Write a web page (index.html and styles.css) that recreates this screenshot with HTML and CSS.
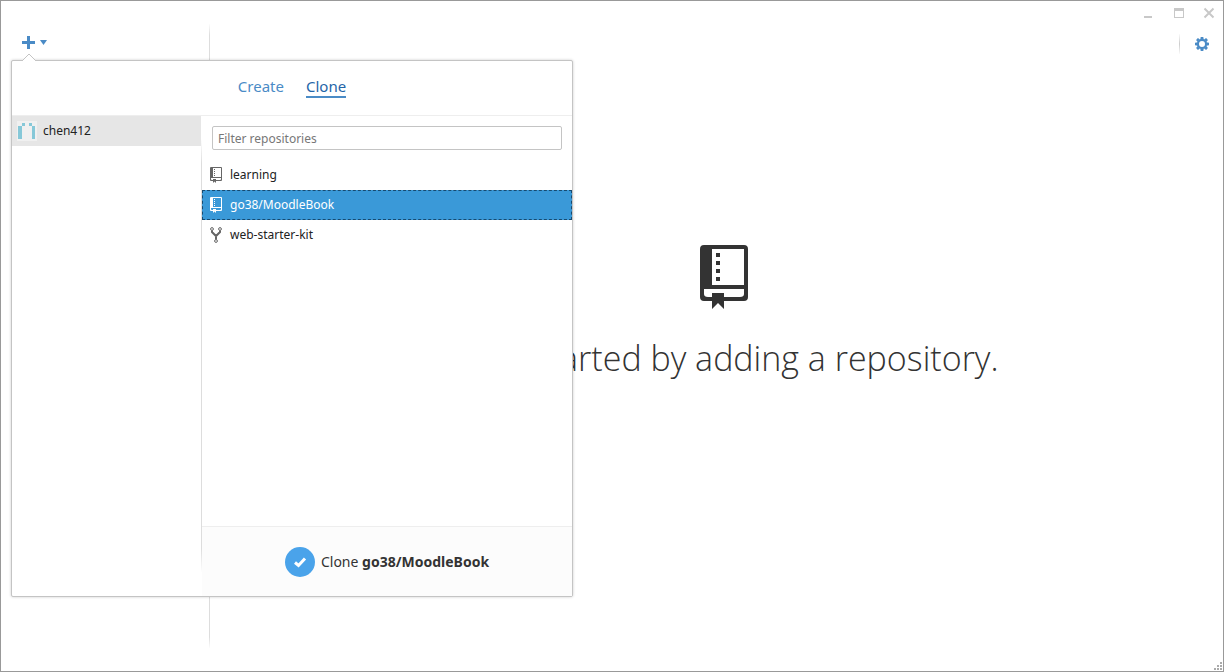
FILE: index.html
```html
<!DOCTYPE html>
<html lang="en">
<head>
<meta charset="utf-8">
<title>Clone a repository</title>
<link rel="stylesheet" href="styles.css">
</head>
<body>
<svg class="defs" aria-hidden="true">
  <symbol id="repo" viewBox="0 0 48 64">
    <path fill="currentColor" fill-rule="evenodd" d="M4 0H44Q48 0 48 4V52Q48 56 44 56H24V64L18 58L12 64V56H4Q0 56 0 52V4Q0 0 4 0ZM12 4V40H44V4ZM4 44V49Q4 52 8 52H12V48H24V52H40Q44 52 44 49V44ZM16 8H20V12H16ZM16 16H20V20H16ZM16 24H20V28H16ZM16 32H20V36H16Z"/>
  </symbol>
</svg>
<div class="window">
  <header class="titlebar">
    <button class="win-btn" aria-label="Minimize"><svg width="12" height="12" viewBox="0 0 12 12"><path d="M1 9h8v2H1z"/></svg></button>
    <button class="win-btn" aria-label="Maximize"><svg width="12" height="12" viewBox="0 0 12 12"><path fill-rule="evenodd" d="M1 1h10v10H1zM2 4v6h8V4z"/></svg></button>
    <button class="win-btn" aria-label="Close"><svg width="12" height="12" viewBox="0 0 12 12"><path d="M1.500 1.500l9 9M10.500 1.500l-9 9" stroke="#c8c8c8" stroke-width="2"/></svg></button>
  </header>
  <div class="workspace">
    <aside class="sidebar">
      <button class="add-btn" aria-label="Add repository">
        <svg width="13" height="13" viewBox="0 0 13 13"><path d="M5 0h3v5h5v3H8v5H5V8H0V5h5z"/></svg>
        <svg width="7" height="5" viewBox="0 0 7 5"><path d="M0 0h7L3.500 5z"/></svg>
      </button>
      <section class="popover">
        <svg class="popover-arrow" width="16" height="8" viewBox="0 0 16 8"><path d="M1 8L8 1L15 8" fill="#fff" stroke="#c4c4c4"/></svg>
        <nav class="tabs">
          <button class="tab">Create</button>
          <button class="tab tab-active">Clone</button>
        </nav>
        <div class="popover-body">
          <div class="accounts">
            <button class="account">
              <svg width="20" height="20" viewBox="0 0 20 20"><path fill="#f0f0f0" d="M0 0h20v20H0z"/><path fill="#86c8d8" d="M5 2h3v3H5zM12 2h3v3h-3zM1 5h4v13H1zM15 5h3v13h-3z"/></svg>
              <span>chen412</span>
            </button>
          </div>
          <div class="repos">
            <div class="filter"><input class="filter-input" type="text" placeholder="Filter repositories" aria-label="Filter repositories"></div>
            <div class="repo-list">
              <button class="repo"><svg class="repo-icon" width="12" height="16"><use href="#repo"/></svg>learning</button>
              <button class="repo repo-selected"><svg class="repo-icon" width="12" height="16"><use href="#repo"/></svg>go38/MoodleBook</button>
              <button class="repo"><svg class="repo-icon" width="12" height="16" viewBox="0 0 12 16" fill="none" stroke="currentColor"><circle cx="2" cy="2" r="1.400"/><circle cx="10" cy="2" r="1.400"/><circle cx="6" cy="14" r="1.400"/><path stroke-width="2" d="M2 3.500V5L6 9L10 5V3.500M6 9V12.500"/></svg>web-starter-kit</button>
            </div>
            <footer class="actions">
              <button class="clone-btn">
                <svg width="30" height="30" viewBox="0 0 30 30"><circle cx="15" cy="15" r="15" fill="#4aa3ea"/><path d="M10 15.500L13.500 18.500L20 11.500" fill="none" stroke="#fff" stroke-width="3"/></svg>
                <span>Clone <b>go38/MoodleBook</b></span>
              </button>
            </footer>
          </div>
        </div>
      </section>
    </aside>
    <main class="main">
      <div class="toolbar">
        <button class="gear" aria-label="Settings"><svg width="14" height="14" viewBox="0 0 14 14"><g fill="#4a8bc6"><path fill-rule="evenodd" d="M7 2a5 5 0 1 0 0 10A5 5 0 0 0 7 2zM7 4a3 3 0 1 1 0 6a3 3 0 0 1 0-6z"/><path d="M5.700 0h2.600l.5 3H5.200zM5.700 14h2.600l.5-3H5.200zM0 5.700v2.600l3 .5V5.200zM14 5.700v2.600l-3 .5V5.200z"/><path d="M1.100 2.900L2.900 1.100L5 2.600L2.600 5zM12.900 2.900L11.100 1.100L9 2.600L11.400 5zM1.100 11.100L2.900 12.900L5 11.400L2.600 9zM12.900 11.100L11.100 12.900L9 11.400L11.400 9z"/></g></svg></button>
      </div>
      <div class="empty">
        <svg width="48" height="64"><use href="#repo"/></svg>
        <h1 class="empty-title">Get started by adding a repository.</h1>
      </div>
    </main>
  </div>
  <svg class="grip" width="9" height="9" viewBox="0 0 9 9" aria-hidden="true"><path fill="#aaa" d="M6 0h2v2H6zM6 3h2v2H6zM3 3h2v2H3zM6 6h2v2H6zM3 6h2v2H3zM0 6h2v2H0z"/></svg>
</div>
</body>
</html>
```
FILE: styles.css
```css
* { box-sizing: border-box; }
body {
  margin: 0;
  background: #fff;
  color: #222;
  font: 12px/18px "Noto Sans", "Open Sans", sans-serif;
}
button {
  margin: 0;
  padding: 0;
  border: 0;
  background: none;
  color: inherit;
  font: inherit;
}
svg { display: block; flex: none; }
.defs { position: absolute; width: 0; height: 0; }
.window {
  position: relative;
  display: flex;
  flex-direction: column;
  min-height: 100vh;
  border: 1px solid #999;
}
.titlebar {
  display: flex;
  justify-content: flex-end;
  gap: 18px;
  height: 23px;
  padding: 6px 8px 0 0;
}
.win-btn { height: 12px; fill: #c8c8c8; }
.workspace { display: flex; flex: 1; padding-bottom: 23px; }
.sidebar {
  position: relative;
  width: 209px;
  padding: 12px 20px;
  border-right: 1px solid;
  border-image: linear-gradient(#fff, #ddd 12px, #ddd calc(100% - 12px), #fff) 1;
}
.add-btn {
  display: flex;
  align-items: center;
  gap: 5px;
  padding-left: 1px;
  fill: #4a8bc6;
}
.popover {
  position: absolute;
  z-index: 1;
  top: 36px;
  left: 10px;
  display: flex;
  flex-direction: column;
  width: 562px;
  height: 537px;
  border: 1px solid #c4c4c4;
  border-radius: 2px;
  background: #fff;
  box-shadow: 0 0 3px rgba(0, 0, 0, .2);
}
.popover-arrow { position: absolute; top: -8px; left: 9px; }
.tabs {
  display: flex;
  justify-content: center;
  align-items: center;
  gap: 22px;
  height: 55px;
  padding-bottom: 2px;
  border-bottom: 1px solid #eee;
  color: #4a8bc6;
  font-size: 15px;
  line-height: 20px;
}
.tab { border-bottom: 2px solid transparent; }
.tab-active { border-color: #4a8bc6; color: #2465a8; }
.popover-body { display: flex; flex: 1; }
.accounts {
  width: 190px;
  border-right: 1px solid;
  border-image: linear-gradient(#fff 24px, #ddd 48px, #ddd calc(100% - 48px), #fff calc(100% - 24px)) 1;
}
.account {
  display: flex;
  align-items: center;
  gap: 6px;
  width: 100%;
  height: 30px;
  padding-left: 5px;
  background: #e6e6e6;
}
.repos { display: flex; flex: 1; flex-direction: column; }
.filter { padding: 10px; }
.filter-input {
  display: block;
  width: 100%;
  height: 24px;
  padding: 0 5px;
  border: 1px solid #c4c4c4;
  border-radius: 2px;
  background: #fff;
  color: #333;
  font: inherit;
}
.filter-input::placeholder { color: #777; opacity: 1; }
.repo-list { flex: 1; }
.repo {
  display: flex;
  align-items: center;
  gap: 8px;
  width: 100%;
  height: 30px;
  padding-left: 8px;
}
.repo-icon { color: #666; }
.repo-selected {
  outline: 1px dashed #174a70;
  outline-offset: -1px;
  background: #3a99d8;
  color: #fff;
}
.repo-selected .repo-icon { color: #fff; }
.actions {
  display: flex;
  justify-content: center;
  align-items: center;
  height: 70px;
  border-top: 1px solid #eee;
  background: #fcfcfc;
}
.clone-btn { display: flex; align-items: center; gap: 6px; font-size: 14px; color: #333; }
.main { display: flex; flex: 1; flex-direction: column; }
.toolbar { display: flex; justify-content: flex-end; padding: 10px 14px 0 0; }
.gear {
  height: 20px;
  padding-left: 15px;
  border-left: 1px solid;
  border-image: linear-gradient(#fff, #ccc, #fff) 1;
}
.empty {
  display: flex;
  flex: 1;
  flex-direction: column;
  align-items: center;
  justify-content: center;
  gap: 24px;
  padding: 0 0 74px 15px;
  color: #333;
}
.empty-title {
  margin: 0;
  padding-left: 20px;
  font: 300 34px/50px "Open Sans", "Noto Sans", sans-serif;
}
.grip { position: absolute; right: 0; bottom: 0; }
```
